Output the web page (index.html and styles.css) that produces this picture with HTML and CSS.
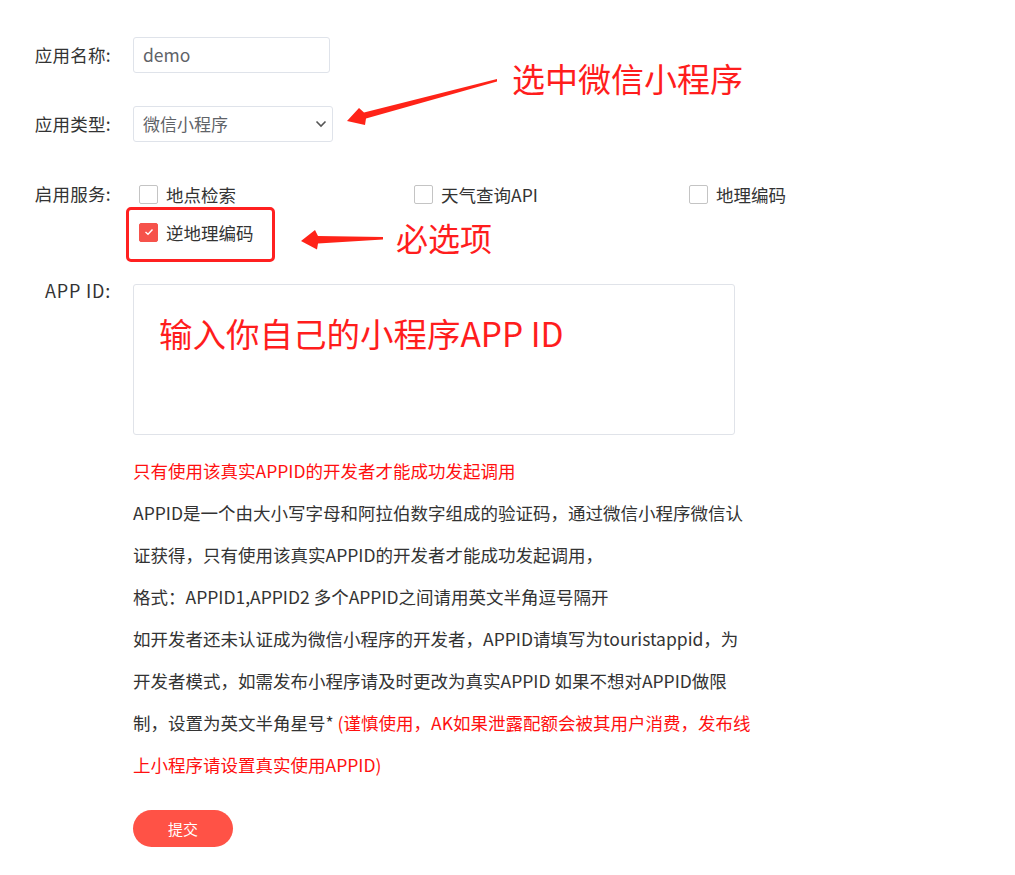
FILE: index.html
```html
<!DOCTYPE html>
<html lang="zh-CN">
<head>
<meta charset="utf-8">
<title>应用配置</title>
<link rel="stylesheet" href="styles.css">
</head>
<body>
<div class="page">
  <form class="form">
    <div class="row row-input">
      <div class="label">应用名称:</div>
      <div class="field"><div class="input">demo</div></div>
    </div>
    <div class="row row-input">
      <div class="label">应用类型:</div>
      <div class="field">
        <div class="select">
          <span>微信小程序</span>
          <svg class="chev" width="12" height="8" viewBox="0 0 12 8"><path d="M1.5 1.5 L6 6 L10.5 1.5" fill="none" stroke="#555" stroke-width="1.6"/></svg>
        </div>
      </div>
    </div>
    <div class="row row-services">
      <div class="label">启用服务:</div>
      <div class="field checks">
        <label class="check"><span class="box"></span><span>地点检索</span></label>
        <label class="check"><span class="box"></span><span>天气查询API</span></label>
        <label class="check"><span class="box"></span><span>地理编码</span></label>
        <label class="check"><span class="box on"><svg width="10" height="8" viewBox="0 0 10 8"><path d="M1.5 4 L4 6.3 L8.5 1.5" fill="none" stroke="#fff" stroke-width="1.4"/></svg></span><span>逆地理编码</span></label>
      </div>
    </div>
    <div class="row row-appid">
      <div class="label label-appid">APP ID:</div>
      <div class="field">
        <div class="textarea"></div>
        <div class="help">
          <p class="warn">只有使用该真实APPID的开发者才能成功发起调用</p>
          <p class="desc">APPID是一个由大小写字母和阿拉伯数字组成的验证码，通过微信小程序微信认<br>证获得，只有使用该真实APPID的开发者才能成功发起调用，<br>格式：APPID1,APPID2 多个APPID之间请用英文半角逗号隔开<br>如开发者还未认证成为微信小程序的开发者，APPID请填写为touristappid，为<br>开发者模式，如需发布小程序请及时更改为真实APPID 如果不想对APPID做限<br>制，设置为英文半角星号* <span class="red">(谨慎使用，AK如果泄露配额会被其用户消费，发布线<br>上小程序请设置真实使用APPID)</span></p>
        </div>
        <button type="button" class="submit">提交</button>
      </div>
    </div>

    <div class="note note-type">选中微信小程序</div>
    <svg class="arrow arrow-type" width="160" height="50" viewBox="340 76 160 50">
      <polygon points="497,79 497,81.5 366,118.5 365,125 347,121 359,108 364,112.5" fill="#ff2318"/>
    </svg>
    <div class="highlight"></div>
    <svg class="arrow arrow-req" width="90" height="24" viewBox="298 228 90 24">
      <polygon points="383,237 383,239.5 318,243.5 317,249.5 301,241 315,230 318,236" fill="#ff2318"/>
    </svg>
    <div class="note note-req">必选项</div>
    <div class="note note-appid">输入你自己的小程序APP ID</div>
  </form>
</div>
</body>
</html>
```
FILE: styles.css
```css
* { box-sizing: border-box; }
html, body { margin: 0; padding: 0; background: #fff; }
body {
  font-family: "Noto Sans CJK SC", "Noto Sans", sans-serif;
  color: #333;
  font-size: 18px;
}
.page { width: 1015px; }
.form { position: relative; padding-top: 37px; margin: 0; }
.row { display: flex; align-items: flex-start; margin-bottom: 33px; }
.label {
  width: 111px;
  margin-right: 22px;
  text-align: right;
  color: #333;
  white-space: nowrap;
  font-size: 17.5px;
  letter-spacing: 0.3px;
}
.row-input .label { line-height: 36px; }
.row-services .label { line-height: 37px; }
.row-appid .label { line-height: 13px; font-size: 18px; letter-spacing: 0.8px; }
.field { flex: none; }
.input, .select {
  height: 36px;
  border: 1px solid #dfe3ea;
  border-radius: 3px;
  padding: 0 9px;
  line-height: 34px;
  color: #5f6368;
  font-size: 17.5px;
}
.input { width: 197px; }
.select {
  width: 200px;
  display: flex;
  justify-content: space-between;
  align-items: center;
  padding-right: 5px;
}
.select span { font-size: 17px; }
.checks { display: grid; grid-template-columns: 275px 275px 275px; }
.check {
  display: flex;
  align-items: center;
  height: 38px;
  padding-left: 6px;
  gap: 8px;
  color: #333;
  font-size: 17.5px;
}
.box {
  width: 19px;
  height: 19px;
  border: 1px solid #c4c4c4;
  border-radius: 2px;
  display: inline-flex;
  align-items: center;
  justify-content: center;
  background: #fff;
}
.box.on { background: #f6524b; border-color: #f6524b; }
.textarea {
  width: 602px;
  height: 151px;
  border: 1px solid #e0e3e9;
  border-radius: 3px;
}
.help { margin-top: 14px; width: 640px; }
.help p { margin: 0; }
.warn { color: #ff1010; line-height: 43px; font-size: 17.5px; }
.desc { line-height: 42px; font-size: 17.5px; color: #333; white-space: nowrap; }
.red { color: #ff1010; }
.submit {
  margin-top: 24px;
  width: 100px;
  height: 37px;
  border: none;
  border-radius: 19px;
  background: #ff5246;
  color: #fff;
  font-family: inherit;
  font-size: 15px;
  padding: 0;
  display: block;
}

/* annotation overlays */
.note {
  position: absolute;
  color: #ff1d1d;
  white-space: nowrap;
  line-height: 1;
}
.note-type { left: 512px; top: 62px; font-size: 33px; }
.note-req { left: 396px; top: 221px; font-size: 32px; }
.note-appid { left: 159px; top: 316px; font-size: 33.5px; }
.arrow { position: absolute; }
.arrow-type { left: 340px; top: 76px; }
.arrow-req { left: 298px; top: 228px; }
.highlight {
  position: absolute;
  left: 126px;
  top: 207px;
  width: 149px;
  height: 55px;
  border: 3px solid #ff2020;
  border-radius: 5px;
}
```
